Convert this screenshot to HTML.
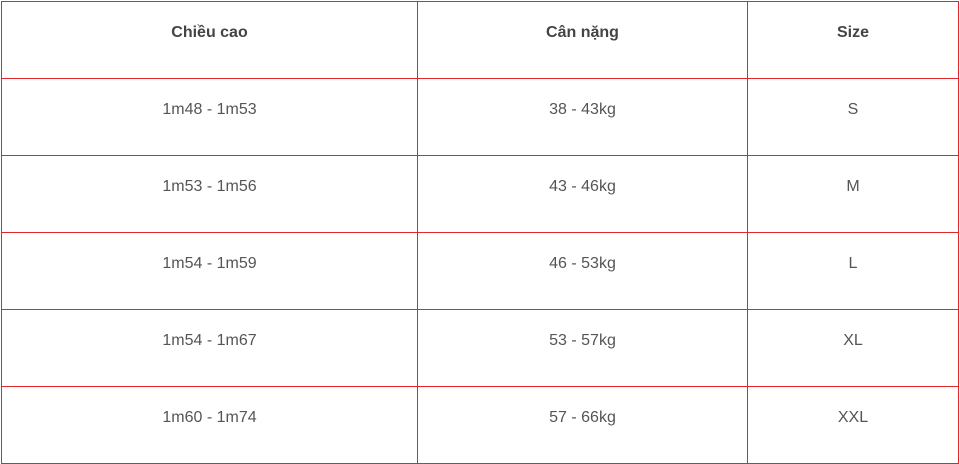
<!DOCTYPE html>
<html><head><meta charset="utf-8"><style>
html,body{margin:0;padding:0;background:#fff;}
table{position:absolute;left:1px;top:1px;border-collapse:collapse;width:958px;font-family:"Liberation Sans",sans-serif;font-size:16px;color:#555;}
td{border:1px solid #e3262b;height:76px;padding:0;text-align:center;vertical-align:middle;}
tr:first-child td{font-weight:bold;color:#444;vertical-align:top;padding-top:22px;height:54px;}
td{vertical-align:top;padding-top:22px;height:54px;}
</style></head><body>
<table>
<colgroup><col style="width:416px"><col style="width:330px"><col></colgroup>
<tr><td>Chiều cao</td><td>Cân nặng</td><td>Size</td></tr>
<tr><td>1m48 - 1m53</td><td>38 - 43kg</td><td>S</td></tr>
<tr><td>1m53 - 1m56</td><td>43 - 46kg</td><td>M</td></tr>
<tr><td>1m54 - 1m59</td><td>46 - 53kg</td><td>L</td></tr>
<tr><td>1m54 - 1m67</td><td>53 - 57kg</td><td>XL</td></tr>
<tr><td>1m60 - 1m74</td><td>57 - 66kg</td><td>XXL</td></tr>
</table>
</body></html>
